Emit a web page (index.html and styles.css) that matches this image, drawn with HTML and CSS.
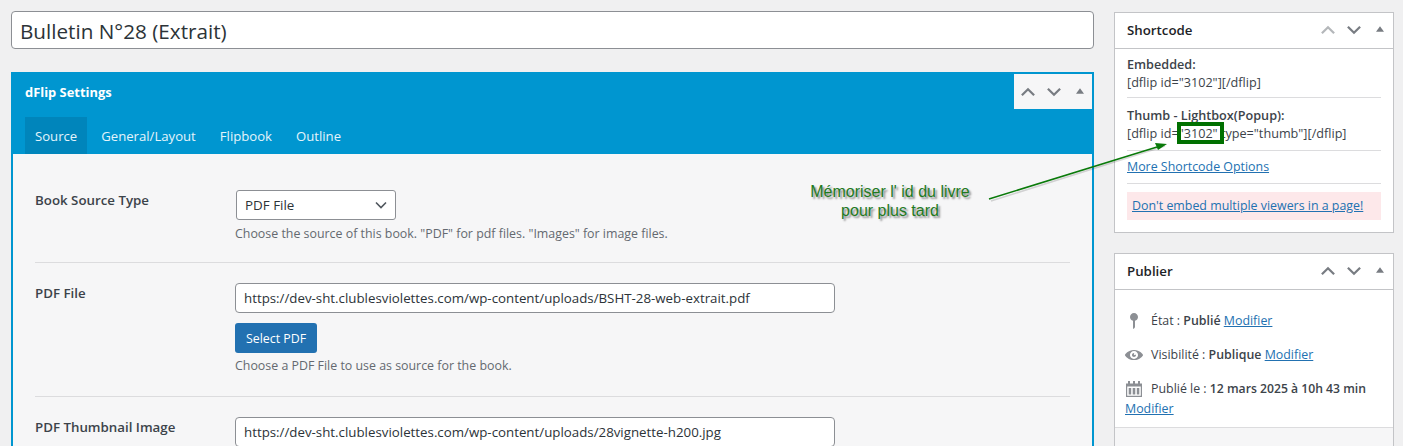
FILE: index.html
```html
<!DOCTYPE html>
<html lang="fr">
<head>
    <meta charset="UTF-8">
    <meta name="viewport" content="width=device-width, initial-scale=1.0">
    <title>Bulletin N°28 (Extrait)</title>
    <link rel="stylesheet" href="styles.css">
</head>
<body>
    <div class="page">
        <main class="main-col">
            <input class="title-input" type="text" value="Bulletin N°28 (Extrait)">

            <section class="dflip-box">
                <div class="dflip-head">
                    <h2>dFlip Settings</h2>
                    <div class="handles handles-white">
                        <svg class="handle" viewBox="0 0 14 9"><path d="M1.5 7.5 7 2l5.500 5.500"/></svg>
                        <svg class="handle" viewBox="0 0 14 9"><path d="M1.500 1.500 7 7l5.500-5.500"/></svg>
                        <svg class="handle-tri" viewBox="0 0 10 7"><path d="M5 0l5 7H0z"/></svg>
                    </div>
                </div>
                <ul class="tabs">
                    <li class="tab active">Source</li>
                    <li class="tab">General/Layout</li>
                    <li class="tab">Flipbook</li>
                    <li class="tab">Outline</li>
                </ul>
                <div class="dflip-body">
                    <div class="row">
                        <div class="row-label">Book Source Type</div>
                        <div class="row-field">
                            <div class="select">PDF File
                                <svg viewBox="0 0 12 8"><path d="M1 1.500l5 5 5-5"/></svg>
                            </div>
                            <p class="help">Choose the source of this book. "PDF" for pdf files. "Images" for image files.</p>
                        </div>
                    </div>
                    <div class="row">
                        <div class="row-label">PDF File</div>
                        <div class="row-field">
                            <input class="url-input" type="text" value="https://dev-sht.clublesviolettes.com/wp-content/uploads/BSHT-28-web-extrait.pdf">
                            <button class="select-btn">Select PDF</button>
                            <p class="help">Choose a PDF File to use as source for the book.</p>
                        </div>
                    </div>
                    <div class="row">
                        <div class="row-label">PDF Thumbnail Image</div>
                        <div class="row-field">
                            <input class="url-input" type="text" value="https://dev-sht.clublesviolettes.com/wp-content/uploads/28vignette-h200.jpg">
                        </div>
                    </div>
                </div>
            </section>
        </main>

        <aside class="side-col">
            <section class="postbox">
                <div class="postbox-head">
                    <h2>Shortcode</h2>
                    <div class="handles">
                        <svg class="handle faded" viewBox="0 0 14 9"><path d="M1.500 7.500 7 2l5.500 5.500"/></svg>
                        <svg class="handle" viewBox="0 0 14 9"><path d="M1.500 1.500 7 7l5.500-5.500"/></svg>
                        <svg class="handle-tri" viewBox="0 0 10 7"><path d="M5 0l5 7H0z"/></svg>
                    </div>
                </div>
                <div class="shortcode-body">
                    <div class="sc-block">
                        <b>Embedded:</b><br>
                        [dflip id="3102"][/dflip]
                    </div>
                    <div class="sc-block sc-thumb">
                        <b>Thumb - Lightbox(Popup):</b><br>
                        [dflip id="3102" type="thumb"][/dflip]
                    </div>
                    <div class="sc-block sc-link"><a href="#">More Shortcode Options</a></div>
                    <div class="sc-warning"><a href="#">Don't embed multiple viewers in a page!</a></div>
                </div>
            </section>

            <section class="postbox">
                <div class="postbox-head">
                    <h2>Publier</h2>
                    <div class="handles">
                        <svg class="handle" viewBox="0 0 14 9"><path d="M1.500 7.500 7 2l5.500 5.500"/></svg>
                        <svg class="handle" viewBox="0 0 14 9"><path d="M1.500 1.500 7 7l5.500-5.500"/></svg>
                        <svg class="handle-tri" viewBox="0 0 10 7"><path d="M5 0l5 7H0z"/></svg>
                    </div>
                </div>
                <div class="publish-body">
                    <div class="pub-line">
                        <svg class="pub-icon" viewBox="0 0 20 20"><path d="M14 6c0 1.860-1.280 3.410-3 3.860V16c0 1-2 2-2 2V9.860c-1.720-.45-3-2-3-3.860 0-2.210 1.790-4 4-4s4 1.790 4 4z"/></svg>
                        <span>État : <b>Publié</b> <a href="#">Modifier</a></span>
                    </div>
                    <div class="pub-line">
                        <svg class="pub-icon" viewBox="-1 -1 22 22"><path d="M10 4.400C3.439 4.400 0 9.232 0 10c0 .766 3.439 5.600 10 5.600 6.560 0 10-4.834 10-5.600 0-.768-3.440-5.600-10-5.600zm0 9.907c-2.455 0-4.445-1.928-4.445-4.307S7.545 5.691 10 5.691s4.444 1.929 4.444 4.309-1.989 4.307-4.444 4.307zM10 10c-.407-.447.663-2.154 0-2.154-1.228 0-2.223.965-2.223 2.154s.995 2.154 2.223 2.154c1.227 0 2.223-.965 2.223-2.154 0-.547-1.877.379-2.223 0z"/></svg>
                        <span>Visibilité : <b>Publique</b> <a href="#">Modifier</a></span>
                    </div>
                    <div class="pub-line pub-date">
                        <svg class="pub-icon" viewBox="0 0 20 20"><path fill-rule="evenodd" d="M2 4.500h2V2h2v2.500h3V2h2v2.500h3V2h2v2.500h2V18H2zM3.200 7.500v9.300h13.600V7.500zM4.700 9h2.500v6.500H4.700zm4 0h2.600v6.500H8.700zm4.100 0h2.500v6.500h-2.500z"/></svg>
                        <span>Publié le : <b>12 mars 2025 à 10h 43 min</b></span>
                        <a class="pub-modify" href="#">Modifier</a>
                    </div>
                </div>
                <div class="publish-footer"></div>
            </section>
        </aside>

        <!-- annotation drawn over the screenshot -->
        <div class="id-marker"></div>
        <svg class="note-arrow" viewBox="0 0 1403 446">
            <path class="arrow-shade" d="M991 201 1165 146"/>
            <path class="arrow-line" d="M989 199 1157 147"/>
            <path class="arrow-head" d="M1167 144 1155 143 1158 150z"/>
        </svg>
        <div class="note">Mémoriser l' id du livre<br>pour plus tard</div>
    </div>
</body>
</html>
```
FILE: styles.css
```css
* {
    box-sizing: border-box;
}
html, body {
    margin: 0;
    padding: 0;
    height: 100%;
}
body {
    font-family: 'Open Sans', sans-serif;
    font-size: 12.400px;
    line-height: 18px;
    color: #3c434a;
    background: #f0f0f1;
    overflow: hidden;
}
.page {
    position: relative;
    display: flex;
    gap: 20px;
    height: 446px;
    padding: 11px 9px 0 11px;
    overflow: hidden;
}
.main-col {
    width: 1083px;
    flex-shrink: 0;
}
.side-col {
    width: 280px;
    flex-shrink: 0;
    padding-top: 1px;
}
.title-input {
    display: block;
    width: 100%;
    height: 38px;
    padding: 2px 8px 0;
    font-family: inherit;
    font-size: 20.700px;
    color: #2c3338;
    background: #fff;
    border: 1px solid #8c8f94;
    border-radius: 4px;
    outline: none;
}

/* dflip settings box */
.dflip-box {
    margin-top: 23px;
    border: 2px solid #0096d0;
    border-top: none;
    background: #f6f6f7;
    height: 400px;
}
.dflip-head {
    display: flex;
    justify-content: space-between;
    align-items: flex-start;
    height: 45px;
    padding-top: 2px;
    background: #0096d0;
}
.dflip-head h2 {
    margin: 8px 0 0 12px;
    font-size: 12.900px;
    line-height: 20px;
    font-weight: 700;
    color: #fff;
}
.handles {
    display: flex;
    align-items: center;
    gap: 10px;
    height: 36px;
}
.handles-white {
    width: 78px;
    height: 35px;
    padding-left: 6px;
    background: #f6f6f7;
}
.handle {
    width: 16px;
    height: 10px;
    fill: none;
    stroke: #787c82;
    stroke-width: 2;
}
.handle.faded {
    stroke: #b4b7ba;
}
.handle-tri {
    width: 8px;
    height: 6px;
    margin-left: 4px;
    margin-top: -2px;
    fill: #787c82;
}
.tabs {
    display: flex;
    margin: 0;
    padding: 0 0 0 12px;
    list-style: none;
    height: 37px;
    background: #0096d0;
}
.tab {
    padding: 9px 10px;
    margin-right: 4px;
    line-height: 20px;
    color: #e4f4fb;
    font-size: 13.150px;
}
.tab.active {
    background: #0085bb;
}
.dflip-body {
    padding: 15px 22px 0;
}
.row {
    display: flex;
    padding: 20px 0 21px;
    border-bottom: 1px solid #dcdcde;
}
.row:first-child {
    padding: 21px 0 19px;
}
.row:last-child {
    border-bottom: none;
}
.row-label {
    width: 200px;
    font-weight: 600;
    font-size: 13.300px;
    line-height: 20px;
    color: #3c434a;
}
.row-field {
    flex: 1;
}
.select {
    display: flex;
    justify-content: space-between;
    align-items: center;
    width: 160px;
    height: 30px;
    margin-left: 1px;
    padding: 0 8px;
    background: #fff;
    border: 1px solid #8c8f94;
    border-radius: 3px;
    font-size: 13.400px;
    color: #2c3338;
}
.select svg {
    width: 12px;
    height: 8px;
    fill: none;
    stroke: #50575e;
    stroke-width: 1.600;
}
.help {
    margin: 4px 0 0;
    color: #646970;
}
.select + .help {
    margin-top: 5px;
}
.url-input {
    display: block;
    width: 600px;
    height: 30px;
    padding: 0 8px;
    font-family: inherit;
    font-size: 13.300px;
    color: #2c3338;
    background: #fff;
    border: 1px solid #8c8f94;
    border-radius: 4px;
    outline: none;
}
.select-btn {
    display: block;
    height: 30px;
    width: 82px;
    margin-top: 10px;
    padding: 0;
    font-family: inherit;
    font-size: 12.400px;
    color: #fff;
    background: #2271b1;
    border: none;
    border-radius: 3px;
}

/* side boxes */
.postbox {
    background: #fff;
    border: 1px solid #c3c4c7;
    margin-bottom: 20px;
}
.postbox-head {
    display: flex;
    justify-content: space-between;
    align-items: center;
    height: 36px;
    padding: 0 9px 1px 12px;
    border-bottom: 1px solid #c3c4c7;
}
.postbox-head h2 {
    margin: 0;
    font-size: 13.300px;
    line-height: 20px;
    font-weight: 600;
    color: #1d2327;
}
a {
    color: #2271b1;
}
b {
    font-weight: 600;
}
.shortcode-body {
    padding: 6px 12px 12px;
}
.sc-block {
    padding-bottom: 6px;
    margin-bottom: 8px;
    border-bottom: 1px solid #dcdcde;
    font-size: 12.650px;
}
.sc-thumb {
    padding-bottom: 8px;
    margin-bottom: 7px;
}
.sc-link {
    font-size: 12.400px;
    padding-bottom: 7px;
    margin-bottom: 8px;
}
.sc-warning {
    padding: 5px;
    background: #fde8ea;
}
.publish-body {
    padding: 21px 10px 9px;
    border-bottom: 1px solid #dcdcde;
}
.pub-line {
    display: flex;
    align-items: center;
    min-height: 20px;
    margin-bottom: 14px;
}
.pub-icon {
    width: 20px;
    height: 20px;
    margin-left: -1px;
    margin-right: 7px;
    flex-shrink: 0;
    fill: #8c8f94;
}
.pub-date {
    flex-wrap: wrap;
    margin-bottom: 0;
}
.pub-date b {
    font-size: 12.200px;
}
.pub-modify {
    width: 100%;
    margin-top: 1px;
}
.publish-footer {
    height: 100px;
    background: #f6f6f7;
}

/* annotation */
.id-marker {
    position: absolute;
    left: 1177px;
    top: 122px;
    width: 47px;
    height: 22px;
    border: 4px solid #007000;
}
.note-arrow {
    position: absolute;
    left: 0;
    top: 0;
    width: 1403px;
    height: 446px;
    pointer-events: none;
}
.arrow-line {
    stroke: #0a7a0a;
    stroke-width: 1.500;
    fill: none;
}
.arrow-shade {
    stroke: rgba(0, 0, 0, 0.15);
    stroke-width: 1.500;
    fill: none;
}
.arrow-head {
    fill: #0a7a0a;
}
.note {
    position: absolute;
    left: 800px;
    top: 182px;
    width: 180px;
    font-family: 'Liberation Sans', sans-serif;
    font-size: 16px;
    line-height: 19px;
    text-align: center;
    color: #1f7a1f;
    text-shadow: 2px 2px 2px rgba(0, 0, 0, 0.45);
}
```
